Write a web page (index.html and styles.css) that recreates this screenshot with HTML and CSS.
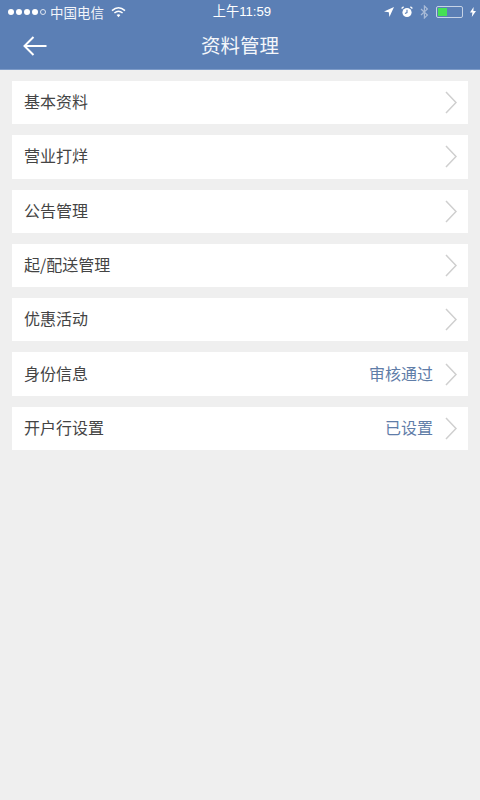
FILE: index.html
```html
<!DOCTYPE html>
<html lang="zh-CN">
<head>
<meta charset="utf-8">
<title>资料管理</title>
<link rel="stylesheet" href="styles.css">
</head>
<body>
<header class="header">
  <div class="status">
    <div class="status-left">
      <span class="signal"><i></i><i></i><i></i><i></i><i class="empty"></i></span>
      <span class="carrier">中国电信</span>
      <svg class="wifi" width="15" height="11" viewBox="0 0 15 11"><path d="M1 3.6C5 .2 10 .2 14 3.6" fill="none" stroke="#fff" stroke-width="1.5"/><path d="M3.4 6C6 3.8 9 3.8 11.6 6" fill="none" stroke="#fff" stroke-width="1.5"/><path d="M5.6 8C6.8 7 8.2 7 9.4 8L7.5 10.2Z" fill="#fff"/></svg>
    </div>
    <div class="time">上午11:59</div>
    <div class="status-right">
      <svg width="10" height="10" viewBox="0 0 10 10"><path d="M10 0L0 4.6L4.8 5.2L5.4 10Z" fill="#fff"/></svg>
      <svg width="12" height="12" viewBox="0 0 12 12"><circle cx="6" cy="6.5" r="4.6" fill="#fff"/><path d="M6 3.8V6.6L4 7.6" fill="none" stroke="#5b7fb5" stroke-width="1.1"/><path d="M0.6 2.6L2.6 .8M11.4 2.6L9.4 .8" stroke="#fff" stroke-width="1.3"/></svg>
      <svg width="9" height="14" viewBox="0 0 9 14"><path d="M1 4L7.4 10L4.4 13V1L7.4 4L1 10" fill="none" stroke="#a9bbd7" stroke-width="1.2"/></svg>
      <span class="battery"><span class="level"></span></span>
      <svg width="6" height="10" viewBox="0 0 6 10"><path d="M3.6 0L0 5.6H2.4L1.8 10L6 4H3.4Z" fill="#fff"/></svg>
    </div>
  </div>
  <div class="navbar">
    <svg class="back" width="24" height="20" viewBox="0 0 24 20"><path d="M23.5 10H1.5M10.5 1L1.5 10L10.5 19" fill="none" stroke="#fff" stroke-width="2"/></svg>
    <h1 class="title">资料管理</h1>
  </div>
</header>
<main class="list">
  <a class="row"><span class="label">基本资料</span><svg class="chev" width="12" height="23" viewBox="0 0 12 23"><path d="M1 1L11 11.5L1 22" fill="none" stroke="#cfcfcf" stroke-width="1.5"/></svg></a>
  <a class="row"><span class="label">营业打烊</span><svg class="chev" width="12" height="23" viewBox="0 0 12 23"><path d="M1 1L11 11.5L1 22" fill="none" stroke="#cfcfcf" stroke-width="1.5"/></svg></a>
  <a class="row"><span class="label">公告管理</span><svg class="chev" width="12" height="23" viewBox="0 0 12 23"><path d="M1 1L11 11.5L1 22" fill="none" stroke="#cfcfcf" stroke-width="1.5"/></svg></a>
  <a class="row"><span class="label">起/配送管理</span><svg class="chev" width="12" height="23" viewBox="0 0 12 23"><path d="M1 1L11 11.5L1 22" fill="none" stroke="#cfcfcf" stroke-width="1.5"/></svg></a>
  <a class="row"><span class="label">优惠活动</span><svg class="chev" width="12" height="23" viewBox="0 0 12 23"><path d="M1 1L11 11.5L1 22" fill="none" stroke="#cfcfcf" stroke-width="1.5"/></svg></a>
  <a class="row"><span class="label">身份信息</span><span class="value">审核通过</span><svg class="chev" width="12" height="23" viewBox="0 0 12 23"><path d="M1 1L11 11.5L1 22" fill="none" stroke="#cfcfcf" stroke-width="1.5"/></svg></a>
  <a class="row"><span class="label">开户行设置</span><span class="value">已设置</span><svg class="chev" width="12" height="23" viewBox="0 0 12 23"><path d="M1 1L11 11.5L1 22" fill="none" stroke="#cfcfcf" stroke-width="1.5"/></svg></a>
</main>
</body>
</html>
```
FILE: styles.css
```css
* { box-sizing: border-box; }
html, body { margin: 0; height: 100%; }
body {
  width: 480px;
  height: 800px;
  overflow: hidden;
  background: #efefef;
  font-family: "Noto Sans CJK SC", "Liberation Sans", sans-serif;
}
.header {
  height: 70px;
  background: #5b7fb5;
  color: #fff;
  border-bottom: 1px solid #7d9bc8;
}
.status {
  height: 24px;
  display: grid;
  grid-template-columns: 1fr auto 1fr;
  align-items: center;
  padding: 0 4px 0 8px;
}
.status-left { display: flex; align-items: center; gap: 4px; }
.signal { display: flex; gap: 2px; }
.signal i { width: 6px; height: 6px; border-radius: 50%; background: #fff; }
.signal i.empty { background: none; border: 1px solid #dfe6f1; }
.carrier { font-size: 13.5px; line-height: 18px; color: #f2f5fa; }
.wifi { margin-left: 3px; }
.time { font-size: 13.2px; line-height: 18px; font-family: "Liberation Sans", "Noto Sans CJK SC", sans-serif; }
.status-right { display: flex; align-items: center; justify-content: flex-end; gap: 7px; }
.battery {
  width: 27px;
  height: 12px;
  border: 1px solid #c6d3e6;
  border-radius: 2px;
  padding: 1px;
  display: flex;
}
.level { width: 9px; background: #45e055; }
.navbar {
  height: 45px;
  position: relative;
  display: flex;
  align-items: center;
  justify-content: center;
  padding-bottom: 4px;
}
.back { position: absolute; left: 23px; top: 12px; }
.title { margin: 0; font-size: 19.5px; font-weight: 400; line-height: 28px; color: #f4f6fa; }
.list {
  display: flex;
  flex-direction: column;
  gap: 11px;
  padding: 11px 12px 0;
}
.row {
  height: 43.3px;
  background: #fff;
  display: flex;
  align-items: center;
  padding: 0 11px 3px 12px;
  font-size: 16px;
}
.label { flex: 1; color: #444; }
.value { color: #5f7da8; margin-right: 12px; }
.chev { flex: none; margin-top: 3px; }
```
